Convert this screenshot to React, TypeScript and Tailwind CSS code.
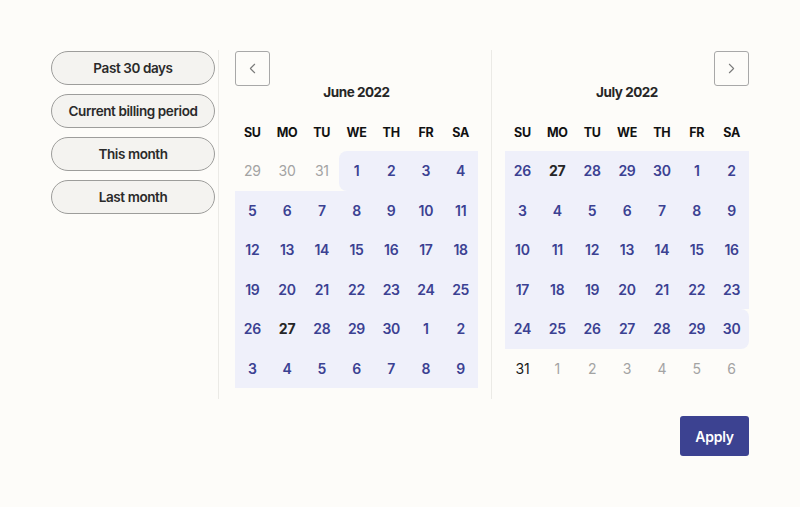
import { ChevronLeft, ChevronRight } from "lucide-react";

type Day = { n: number; kind: "out" | "in" | "today" | "plain"; edge?: "start" | "end" };

const weekdays = ["SU", "MO", "TU", "WE", "TH", "FR", "SA"];

const presets = ["Past 30 days", "Current billing period", "This month", "Last month"];

function buildJune(): Day[] {
  const days: Day[] = [
    { n: 29, kind: "out" },
    { n: 30, kind: "out" },
    { n: 31, kind: "out" },
  ];
  for (let i = 1; i <= 30; i++) {
    days.push({ n: i, kind: i === 27 ? "today" : "in", edge: i === 1 ? "start" : undefined });
  }
  for (let i = 1; i <= 9; i++) days.push({ n: i, kind: "in" });
  return days;
}

function buildJuly(): Day[] {
  const days: Day[] = [];
  for (let i = 26; i <= 30; i++) days.push({ n: i, kind: i === 27 ? "today" : "in" });
  for (let i = 1; i <= 30; i++) days.push({ n: i, kind: "in", edge: i === 30 ? "end" : undefined });
  days.push({ n: 31, kind: "plain" });
  for (let i = 1; i <= 6; i++) days.push({ n: i, kind: "out" });
  return days;
}

function DayCell({ day }: { day: Day }) {
  const highlighted = day.kind === "in" || day.kind === "today";
  const color =
    day.kind === "out"
      ? "text-[#a3a3a3] font-normal"
      : day.kind === "plain"
      ? "text-[#1a1a1a] font-normal"
      : day.kind === "today"
      ? "text-[#262626] font-bold"
      : "text-[#3b4192] font-semibold";
  return (
    <div
      className={`h-[39.5px] flex items-center justify-center text-[14px] tracking-[-0.02em] ${color} ${
        highlighted ? "bg-[#eff0fa]" : ""
      } ${day.edge === "start" ? "rounded-l-[8px]" : ""} ${day.edge === "end" ? "rounded-r-[8px]" : ""}`}
    >
      {day.n}
    </div>
  );
}

function Month({ title, days, nav }: { title: string; days: Day[]; nav: "prev" | "next" }) {
  return (
    <div className="flex flex-col">
      <div className={`h-[34px] flex ${nav === "prev" ? "justify-start" : "justify-end"}`}>
        <button className="w-[35px] h-[35px] border border-[#a8a8a8] rounded-[3px] flex items-center justify-center text-[#7a7a7a]">
          {nav === "prev" ? (
            <ChevronLeft size={17} strokeWidth={1.5} />
          ) : (
            <ChevronRight size={17} strokeWidth={1.5} />
          )}
        </button>
      </div>
      <div className="text-center text-[13.5px] leading-[14px] font-bold tracking-[-0.035em] text-[#262626]">
        {title}
      </div>
      <div className="grid grid-cols-7 mt-[13px] h-[39px] pt-[3px] items-center">
        {weekdays.map((w) => (
          <div key={w} className="text-center text-[12.5px] font-bold tracking-[-0.02em] text-[#111]">
            {w}
          </div>
        ))}
      </div>
      <div className="grid grid-cols-7">
        {days.map((d, i) => (
          <DayCell key={i} day={d} />
        ))}
      </div>
    </div>
  );
}

export default function App() {
  return (
    <div
      className="min-h-screen bg-[#fdfcf9] px-[51px] pt-[51px]"
      style={{ fontFamily: "Inter, 'Noto Sans', sans-serif" }}
    >
      <div className="flex">
        {/* Presets */}
        <div className="w-[168px] border-r border-[#ebeae6] h-[349px] -mt-px pt-px">
          <div className="w-[164px] flex flex-col gap-[9px]">
            {presets.map((p) => (
              <button
                key={p}
                className="h-[34px] rounded-full border border-[#9d9d9b] bg-[#f4f3f0] text-[13.5px] font-semibold tracking-[-0.03em] text-[#2a2a2a]"
              >
                {p}
              </button>
            ))}
          </div>
        </div>

        {/* June */}
        <div className="pl-4 pr-[13px] border-r border-[#ebeae6] h-[349px] -mt-px pt-px">
          <div className="w-[243px]">
            <Month title="June 2022" days={buildJune()} nav="prev" />
          </div>
        </div>

        {/* July */}
        <div className="pl-[13px]">
          <div className="w-[244px]">
            <Month title="July 2022" days={buildJuly()} nav="next" />
          </div>
        </div>
      </div>

      <div className="flex justify-end mt-[17px]">
        <button className="w-[69px] h-[40px] rounded-[3px] bg-[#3c4291] text-white text-[14px] font-semibold tracking-[-0.02em]">
          Apply
        </button>
      </div>
    </div>
  );
}
